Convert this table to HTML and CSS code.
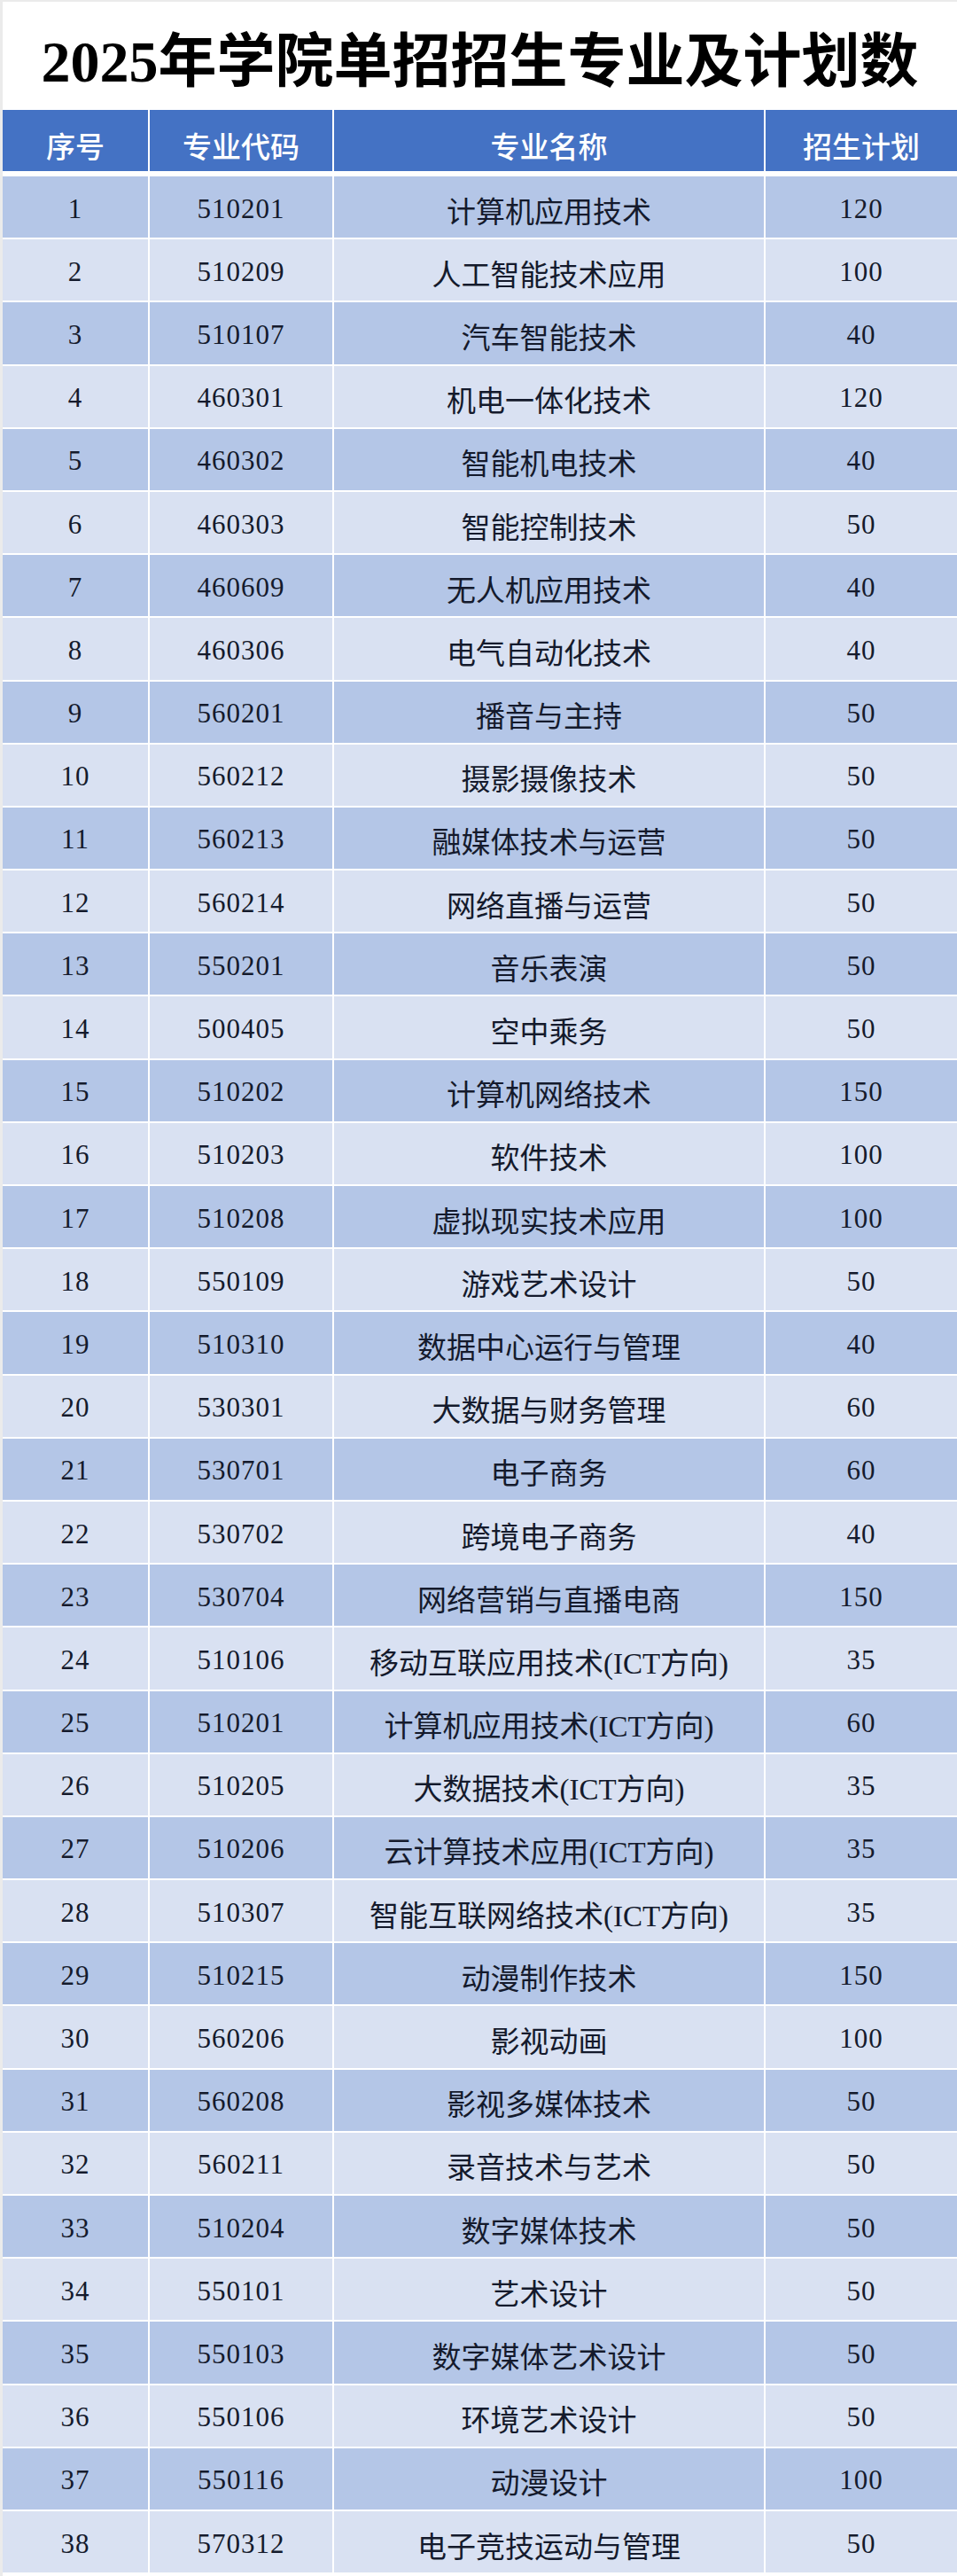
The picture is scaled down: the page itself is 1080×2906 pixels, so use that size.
FILE: index.html
```html
<!DOCTYPE html>
<html lang="zh-CN">
<head>
<meta charset="utf-8">
<title>2025年学院单招招生专业及计划数</title>
<link rel="stylesheet" href="styles.css">
</head>
<body>
<div class="sheet">
  <h1 class="title">2025年学院单招招生专业及计划数</h1>
  <div class="row head">
    <div class="cell">序号</div>
    <div class="cell">专业代码</div>
    <div class="cell">专业名称</div>
    <div class="cell">招生计划</div>
  </div>
  <div class="body">
    <div class="row odd"><div class="cell">1</div><div class="cell">510201</div><div class="cell name">计算机应用技术</div><div class="cell">120</div></div>
    <div class="row even"><div class="cell">2</div><div class="cell">510209</div><div class="cell name">人工智能技术应用</div><div class="cell">100</div></div>
    <div class="row odd"><div class="cell">3</div><div class="cell">510107</div><div class="cell name">汽车智能技术</div><div class="cell">40</div></div>
    <div class="row even"><div class="cell">4</div><div class="cell">460301</div><div class="cell name">机电一体化技术</div><div class="cell">120</div></div>
    <div class="row odd"><div class="cell">5</div><div class="cell">460302</div><div class="cell name">智能机电技术</div><div class="cell">40</div></div>
    <div class="row even"><div class="cell">6</div><div class="cell">460303</div><div class="cell name">智能控制技术</div><div class="cell">50</div></div>
    <div class="row odd"><div class="cell">7</div><div class="cell">460609</div><div class="cell name">无人机应用技术</div><div class="cell">40</div></div>
    <div class="row even"><div class="cell">8</div><div class="cell">460306</div><div class="cell name">电气自动化技术</div><div class="cell">40</div></div>
    <div class="row odd"><div class="cell">9</div><div class="cell">560201</div><div class="cell name">播音与主持</div><div class="cell">50</div></div>
    <div class="row even"><div class="cell">10</div><div class="cell">560212</div><div class="cell name">摄影摄像技术</div><div class="cell">50</div></div>
    <div class="row odd"><div class="cell">11</div><div class="cell">560213</div><div class="cell name">融媒体技术与运营</div><div class="cell">50</div></div>
    <div class="row even"><div class="cell">12</div><div class="cell">560214</div><div class="cell name">网络直播与运营</div><div class="cell">50</div></div>
    <div class="row odd"><div class="cell">13</div><div class="cell">550201</div><div class="cell name">音乐表演</div><div class="cell">50</div></div>
    <div class="row even"><div class="cell">14</div><div class="cell">500405</div><div class="cell name">空中乘务</div><div class="cell">50</div></div>
    <div class="row odd"><div class="cell">15</div><div class="cell">510202</div><div class="cell name">计算机网络技术</div><div class="cell">150</div></div>
    <div class="row even"><div class="cell">16</div><div class="cell">510203</div><div class="cell name">软件技术</div><div class="cell">100</div></div>
    <div class="row odd"><div class="cell">17</div><div class="cell">510208</div><div class="cell name">虚拟现实技术应用</div><div class="cell">100</div></div>
    <div class="row even"><div class="cell">18</div><div class="cell">550109</div><div class="cell name">游戏艺术设计</div><div class="cell">50</div></div>
    <div class="row odd"><div class="cell">19</div><div class="cell">510310</div><div class="cell name">数据中心运行与管理</div><div class="cell">40</div></div>
    <div class="row even"><div class="cell">20</div><div class="cell">530301</div><div class="cell name">大数据与财务管理</div><div class="cell">60</div></div>
    <div class="row odd"><div class="cell">21</div><div class="cell">530701</div><div class="cell name">电子商务</div><div class="cell">60</div></div>
    <div class="row even"><div class="cell">22</div><div class="cell">530702</div><div class="cell name">跨境电子商务</div><div class="cell">40</div></div>
    <div class="row odd"><div class="cell">23</div><div class="cell">530704</div><div class="cell name">网络营销与直播电商</div><div class="cell">150</div></div>
    <div class="row even"><div class="cell">24</div><div class="cell">510106</div><div class="cell name">移动互联应用技术(ICT方向)</div><div class="cell">35</div></div>
    <div class="row odd"><div class="cell">25</div><div class="cell">510201</div><div class="cell name">计算机应用技术(ICT方向)</div><div class="cell">60</div></div>
    <div class="row even"><div class="cell">26</div><div class="cell">510205</div><div class="cell name">大数据技术(ICT方向)</div><div class="cell">35</div></div>
    <div class="row odd"><div class="cell">27</div><div class="cell">510206</div><div class="cell name">云计算技术应用(ICT方向)</div><div class="cell">35</div></div>
    <div class="row even"><div class="cell">28</div><div class="cell">510307</div><div class="cell name">智能互联网络技术(ICT方向)</div><div class="cell">35</div></div>
    <div class="row odd"><div class="cell">29</div><div class="cell">510215</div><div class="cell name">动漫制作技术</div><div class="cell">150</div></div>
    <div class="row even"><div class="cell">30</div><div class="cell">560206</div><div class="cell name">影视动画</div><div class="cell">100</div></div>
    <div class="row odd"><div class="cell">31</div><div class="cell">560208</div><div class="cell name">影视多媒体技术</div><div class="cell">50</div></div>
    <div class="row even"><div class="cell">32</div><div class="cell">560211</div><div class="cell name">录音技术与艺术</div><div class="cell">50</div></div>
    <div class="row odd"><div class="cell">33</div><div class="cell">510204</div><div class="cell name">数字媒体技术</div><div class="cell">50</div></div>
    <div class="row even"><div class="cell">34</div><div class="cell">550101</div><div class="cell name">艺术设计</div><div class="cell">50</div></div>
    <div class="row odd"><div class="cell">35</div><div class="cell">550103</div><div class="cell name">数字媒体艺术设计</div><div class="cell">50</div></div>
    <div class="row even"><div class="cell">36</div><div class="cell">550106</div><div class="cell name">环境艺术设计</div><div class="cell">50</div></div>
    <div class="row odd"><div class="cell">37</div><div class="cell">550116</div><div class="cell name">动漫设计</div><div class="cell">100</div></div>
    <div class="row even"><div class="cell">38</div><div class="cell">570312</div><div class="cell name">电子竞技运动与管理</div><div class="cell">50</div></div>
  </div>
</div>
</body>
</html>
```
FILE: styles.css
```css
html, body {
  margin: 0;
  padding: 0;
}
body {
  background: #ebebeb;
  width: 1080px;
  height: 2906px;
  overflow: hidden;
}
.sheet {
  margin: 2px 0 0 3px;
  background: #ffffff;
  min-height: 2904px;
}
.title {
  margin: 0;
  height: 122px;
  display: flex;
  align-items: center;
  justify-content: center;
  font-family: "Liberation Serif", "Noto Sans CJK SC", serif;
  font-weight: 700;
  font-size: 66px;
  color: #000000;
  letter-spacing: 0;
}
.row {
  display: grid;
  grid-template-columns: 164px 206px 485px 216px;
  column-gap: 2px;
}
.cell {
  display: flex;
  align-items: center;
  justify-content: center;
  white-space: nowrap;
}
.head {
  height: 69px;
  margin-bottom: 6px;
}
.head .cell {
  background: #4472c4;
  color: #ffffff;
  font-family: "Noto Sans CJK SC", sans-serif;
  font-size: 33px;
  font-weight: 500;
  padding-top: 10px;
  box-sizing: border-box;
}
.body {
  display: flex;
  flex-direction: column;
  row-gap: 2px;
}
.body .row {
  height: 69.2px;
}
.body .cell {
  color: #141a2c;
  font-family: "Liberation Serif", "Noto Sans CJK SC", serif;
  font-size: 31px;
  letter-spacing: 1px;
  padding-top: 4px;
  box-sizing: border-box;
}
.body .cell.name {
  font-size: 33px;
  letter-spacing: 0;
  padding-top: 6px;
}
.odd .cell {
  background: #b4c6e7;
}
.even .cell {
  background: #d9e1f2;
}
```
